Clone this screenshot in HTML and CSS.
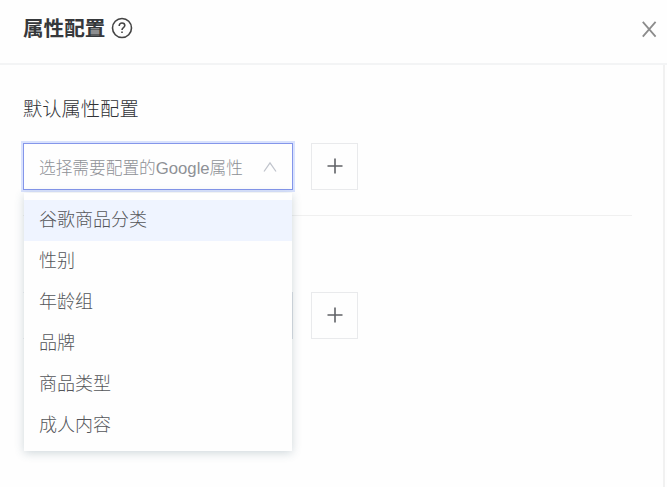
FILE: index.html
```
<!doctype html>
<html lang="zh-CN">
<head>
<meta charset="UTF-8">
<meta name="viewport" content="width=device-width,initial-scale=1">
<title>属性配置</title>
<link rel="stylesheet" href="styles.css">
</head>
<body>
<div class="drawer">
  <div class="header">
    <div class="title">属性配置</div>
    <svg class="help" viewBox="0 0 22 22">
      <circle cx="11" cy="11" r="9.5"/>
      <path d="M8.2 8.9c0-1.8 1.2-2.9 2.8-2.9s2.8 1.1 2.8 2.6c0 2-2.8 2.1-2.8 4.3"/>
      <path d="M11 14.4v1.6"/>
    </svg>
    <svg class="close" viewBox="0 0 16 18">
      <path d="M1.8 1.8l12.8 14.8M14.6 1.8l-12.8 14.8"/>
    </svg>
  </div>
  <div class="content">
    <div class="label">默认属性配置</div>
    <div class="row">
      <div class="select open">
        <span>选择需要配置的Google属性</span>
        <svg class="arrow" viewBox="0 0 14 12"><path d="M1 10.5l6-8.5 6 8.5"/></svg>
        <ul class="dropdown">
          <li class="active">谷歌商品分类</li>
          <li>性别</li>
          <li>年龄组</li>
          <li>品牌</li>
          <li>商品类型</li>
          <li>成人内容</li>
        </ul>
      </div>
      <div class="add"><svg viewBox="0 0 16 16"><path d="M8 .5v15M.5 8h15"/></svg></div>
    </div>
    <div class="line"></div>
    <div class="row">
      <div class="select"></div>
      <div class="add"><svg viewBox="0 0 16 16"><path d="M8 .5v15M.5 8h15"/></svg></div>
    </div>
  </div>
</div>
</body>
</html>
```
FILE: styles.css
```
* {
	box-sizing: border-box;
}
body {
	margin: 0;
	background: #fefefe;
	font-family: "Liberation Sans", "Noto Sans CJK SC", sans-serif;
	font-weight: 300;
	overflow: hidden;
}
svg {
	display: block;
	flex: none;
	fill: none;
}
.drawer {
	display: flex;
	flex-direction: column;
	height: 487px;
}
.header {
	display: flex;
	align-items: center;
	height: 65px;
	padding: 0 10px 8px 23px;
	border-bottom: 2px solid #f3f4f5;
}
.title {
	margin-top: 2px;
	font-size: 20.6px;
	font-weight: bold;
	line-height: 30px;
	color: #36383b;
}
.help {
	width: 22px;
	height: 22px;
	margin-left: 6px;
	stroke: #444;
	stroke-width: 1.6;
}
.close {
	width: 16px;
	height: 18px;
	margin: 3px 0 0 auto;
	stroke: #8c8c8c;
	stroke-width: 1.8;
}
.content {
	flex: 1;
	width: 665px;
	padding: 31px 31px 0 23px;
	border-right: 2px solid #f1f1f1;
}
.label {
	height: 47px;
	font-size: 19.3px;
	line-height: 28px;
	color: #303236;
}
.row {
	display: flex;
	gap: 18px;
}
.select {
	position: relative;
	display: flex;
	align-items: center;
	justify-content: space-between;
	width: 270px;
	height: 47px;
	padding: 0 15px;
	border: 1px solid #dcdfe6;
	border-left-color: transparent;
	font-size: 16.7px;
	color: #8e9196;
	white-space: nowrap;
}
.select.open {
	border-color: #8496ea;
	box-shadow: 0 0 0 2px #d9e2fd;
}
.arrow {
	width: 14px;
	height: 12px;
	stroke: #c0c4cc;
	stroke-width: 1.3;
}
.dropdown {
	position: absolute;
	top: 49px;
	left: 0;
	z-index: 2;
	width: 268px;
	margin: 0;
	padding: 7px 0 5px;
	list-style: none;
	background: #fefefe;
	box-shadow: 0 2px 9px rgba(60, 90, 110, .24);
}
.dropdown li {
	height: 41px;
	padding-left: 15px;
	font-size: 18px;
	line-height: 41px;
	color: #54565a;
}
.dropdown .active {
	background: #eff4ff;
}
.add {
	display: flex;
	align-items: center;
	justify-content: center;
	width: 47px;
	height: 47px;
	border: 1px solid #e9eaec;
}
.add svg {
	width: 16px;
	height: 16px;
	margin-top: -1px;
	stroke: #606266;
	stroke-width: 1.6;
}
.line {
	height: 1px;
	margin: 25px 0 76px;
	background: #f0f0f0;
}
```
